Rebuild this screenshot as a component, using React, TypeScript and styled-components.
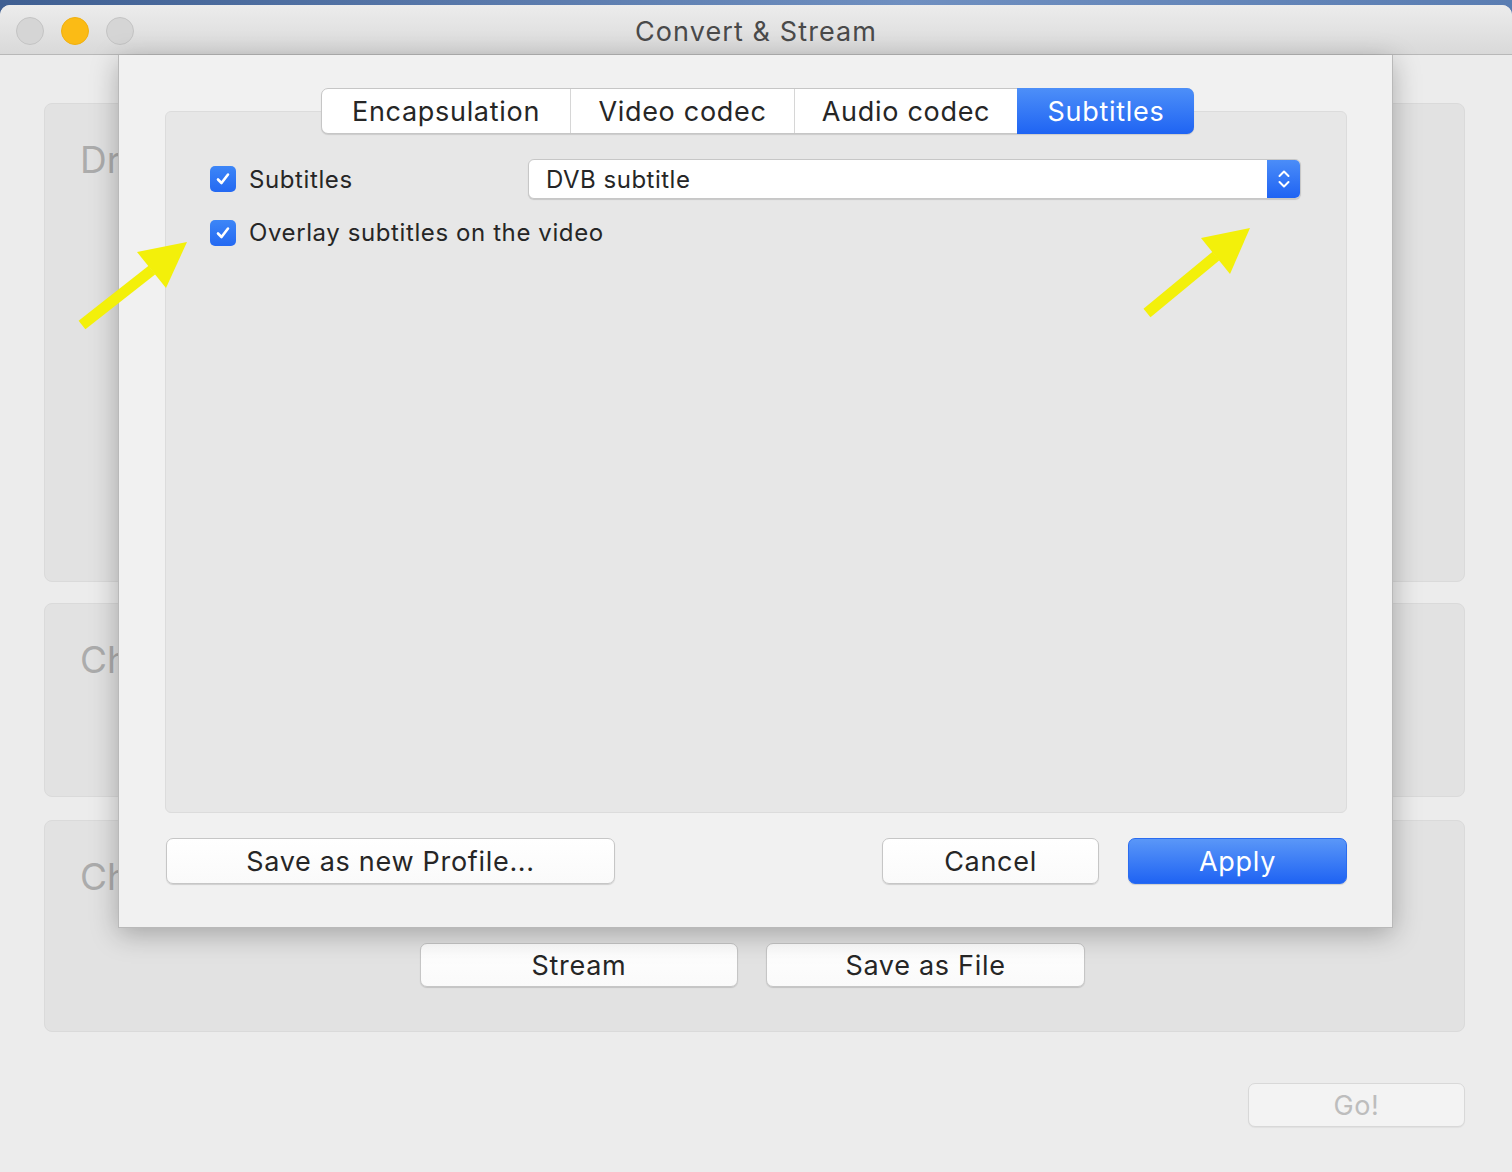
import React from "react";
import styled, { createGlobalStyle } from "styled-components";

const GlobalStyle = createGlobalStyle`
  html, body {
    margin: 0;
    padding: 0;
    background: #5b7db3;
  }
  body {
    font-family: Inter, "Liberation Sans", sans-serif;
  }
  * {
    box-sizing: border-box;
  }
`;

const Page = styled.div`
  position: relative;
  width: 1512px;
  height: 1172px;
  padding-top: 5px;
  background: linear-gradient(90deg, #3f5f92 0%, #6f8fc0 60%, #5a7db2 100%);
  overflow: hidden;
`;

const Window = styled.div`
  height: 1167px;
  border-radius: 10px 10px 0 0;
  background: #ececec;
  display: flex;
  flex-direction: column;
  overflow: hidden;
`;

const TitleBar = styled.div`
  height: 50px;
  flex: none;
  display: grid;
  grid-template-columns: 1fr auto 1fr;
  align-items: center;
  background: linear-gradient(#ececec, #d9d9d9);
  border-bottom: 1px solid #b8b8b8;
`;

const Lights = styled.div`
  display: flex;
  gap: 17px;
  padding-left: 16px;
  padding-top: 2px;
`;

const Light = styled.span<{ $color: string; $edge: string }>`
  width: 28px;
  height: 28px;
  border-radius: 50%;
  background: ${(p) => p.$color};
  border: 1px solid ${(p) => p.$edge};
`;

const Title = styled.div`
  font-size: 27px;
  color: #4a4a4a;
  letter-spacing: 1.1px;
  padding-top: 3px;
`;

const Body = styled.div`
  position: relative;
  flex: 1;
  padding: 48px 47px 0 44px;
  display: flex;
  flex-direction: column;
`;

const Panel = styled.div<{ $h: number }>`
  height: ${(p) => p.$h}px;
  border-radius: 8px;
  background: #e2e2e2;
  border: 1px solid #dadada;
  padding: 34px 0 0 35px;
  display: flex;
  flex-direction: column;
`;

const PanelLabel = styled.div`
  font-size: 37px;
  line-height: 43px;
  color: #acacac;
`;

const PanelButtons = styled.div`
  display: flex;
  justify-content: center;
  gap: 28px;
  margin-top: 45px;
  margin-left: -39px;
`;

const MacButton = styled.button<{ $w: number; $h?: number; $primary?: boolean; $dim?: boolean }>`
  width: ${(p) => p.$w}px;
  height: ${(p) => p.$h ?? 46}px;
  padding: 0;
  border-radius: 7px;
  font-family: inherit;
  font-size: 27px;
  letter-spacing: 0.7px;
  cursor: default;
  color: ${(p) => (p.$primary ? "#ffffff" : p.$dim ? "#bdbdbd" : "#262626")};
  background: ${(p) =>
    p.$primary
      ? "linear-gradient(#5a97f8, #1f63f3)"
      : p.$dim
      ? "#f3f3f3"
      : "linear-gradient(#ffffff, #fafafa)"};
  border: 1px solid ${(p) => (p.$primary ? "#2a6cf0" : p.$dim ? "#d8d8d8" : "#c6c6c6")};
  box-shadow: 0 1px 1px rgba(0, 0, 0, ${(p) => (p.$dim ? 0.05 : 0.14)});
`;

const GoRow = styled.div`
  display: flex;
  justify-content: flex-end;
  margin-top: 51px;
`;

const Stack = styled.div`
  display: flex;
  flex-direction: column;
`;

const Sheet = styled.div`
  position: absolute;
  top: 0;
  left: 118px;
  width: 1275px;
  height: 873px;
  background: #f1f1f1;
  border: 1px solid #b9b9b9;
  border-top: none;
  box-shadow: 0 6px 26px rgba(0, 0, 0, 0.28);
  padding: 33px 45px 43px 46px;
  display: flex;
  flex-direction: column;
`;

const Tabs = styled.div`
  position: relative;
  z-index: 1;
  align-self: center;
  display: flex;
  height: 46px;
  background: #ffffff;
  border: 1px solid #c6c6c6;
  border-radius: 7px;
  box-shadow: 0 1px 1px rgba(0, 0, 0, 0.12);
  margin-left: 3px;
`;

const Tab = styled.div<{ $w: number; $active?: boolean }>`
  width: ${(p) => p.$w}px;
  display: flex;
  align-items: center;
  justify-content: center;
  font-size: 27px;
  letter-spacing: 0.7px;
  color: ${(p) => (p.$active ? "#ffffff" : "#262626")};
  background: ${(p) => (p.$active ? "linear-gradient(#4d8ff8, #1f64f3)" : "transparent")};
  border-left: 1px solid ${(p) => (p.$active ? "transparent" : "#d6d6d6")};
  margin: ${(p) => (p.$active ? "-1px -1px -1px 0" : "0")};
  border-radius: ${(p) => (p.$active ? "0 7px 7px 0" : "0")};
  &:first-child {
    border-left: none;
  }
`;

const GroupBox = styled.div`
  flex: 1;
  margin-top: -23px;
  background: #e7e7e7;
  border: 1px solid #dcdcdc;
  border-radius: 6px;
  padding: 47px 45px 0 44px;
  display: flex;
  flex-direction: column;
  gap: 19px;
`;

const OptionRow = styled.div`
  display: grid;
  grid-template-columns: 318px 1fr;
  align-items: center;
`;

const CheckLabel = styled.label`
  display: flex;
  align-items: center;
  gap: 13px;
  font-size: 24px;
  letter-spacing: 0.6px;
  color: #262626;
`;

const CheckBox = styled.span`
  width: 26px;
  height: 26px;
  border-radius: 5px;
  background: linear-gradient(#3d86f7, #2469f2);
  display: flex;
  align-items: center;
  justify-content: center;
`;

const Select = styled.div`
  height: 40px;
  display: flex;
  align-items: center;
  background: #ffffff;
  border: 1px solid #c7c7c7;
  border-radius: 6px;
  box-shadow: 0 1px 1px rgba(0, 0, 0, 0.14);
  overflow: hidden;
`;

const SelectText = styled.span`
  flex: 1;
  padding-left: 17px;
  font-size: 24px;
  letter-spacing: 0.5px;
  color: #262626;
`;

const Stepper = styled.span`
  width: 33px;
  align-self: stretch;
  background: linear-gradient(#4b8df8, #1f63f3);
  display: flex;
  align-items: center;
  justify-content: center;
`;

const Actions = styled.div`
  display: flex;
  margin-top: 25px;
  gap: 29px;
  padding-left: 1px;
`;

const Spacer = styled.div`
  flex: 1;
`;

const Arrow = styled.svg<{ $x: number; $y: number }>`
  position: absolute;
  left: ${(p) => p.$x}px;
  top: ${(p) => p.$y}px;
  width: 130px;
  height: 110px;
`;

function Check() {
  return (
    <CheckBox>
      <svg width="16" height="16" viewBox="0 0 16 16">
        <path d="M3 8.5 L6.5 12 L13 3.5" fill="none" stroke="#fff" strokeWidth="2.6" strokeLinecap="round" strokeLinejoin="round" />
      </svg>
    </CheckBox>
  );
}

function YellowArrow({ x, y, tail, base, tip, left, right }: {
  x: number; y: number; tail: number[]; base: number[]; tip: number[]; left: number[]; right: number[];
}) {
  return (
    <Arrow $x={x} $y={y} viewBox={`${x} ${y} 130 110`}>
      <line x1={tail[0]} y1={tail[1]} x2={base[0]} y2={base[1]} stroke="#f3f00a" strokeWidth="11" />
      <polygon points={`${tip.join(",")} ${left.join(",")} ${right.join(",")}`} fill="#f3f00a" />
    </Arrow>
  );
}

export default function App() {
  return (
    <Page>
      <GlobalStyle />
      <Window>
        <TitleBar>
          <Lights>
            <Light $color="#d5d5d5" $edge="#c4c4c4" />
            <Light $color="#fbbb15" $edge="#f0b010" />
            <Light $color="#d5d5d5" $edge="#c4c4c4" />
          </Lights>
          <Title>Convert &amp; Stream</Title>
          <div />
        </TitleBar>
        <Body>
          <Stack>
            <Panel $h={479}>
              <PanelLabel>Dr</PanelLabel>
            </Panel>
            <div style={{ height: 21 }} />
            <Panel $h={194}>
              <PanelLabel>Ch</PanelLabel>
            </Panel>
            <div style={{ height: 23 }} />
            <Panel $h={212}>
              <PanelLabel>Ch</PanelLabel>
              <PanelButtons>
                <MacButton $w={318} $h={44}>Stream</MacButton>
                <MacButton $w={319} $h={44}>Save as File</MacButton>
              </PanelButtons>
            </Panel>
          </Stack>
          <GoRow>
            <MacButton $w={217} $h={44} $dim>Go!</MacButton>
          </GoRow>

          <Sheet>
            <Tabs>
              <Tab $w={248}>Encapsulation</Tab>
              <Tab $w={224}>Video codec</Tab>
              <Tab $w={223}>Audio codec</Tab>
              <Tab $w={177} $active>Subtitles</Tab>
            </Tabs>
            <GroupBox>
              <OptionRow>
                <CheckLabel>
                  <Check />
                  Subtitles
                </CheckLabel>
                <Select>
                  <SelectText>DVB subtitle</SelectText>
                  <Stepper>
                    <svg width="14" height="24" viewBox="0 0 14 24">
                      <path d="M2.5 9 L7 4.5 L11.5 9 M2.5 15 L7 19.5 L11.5 15" fill="none" stroke="#fff" strokeWidth="2" strokeLinecap="round" strokeLinejoin="round" />
                    </svg>
                  </Stepper>
                </Select>
              </OptionRow>
              <CheckLabel>
                <Check />
                Overlay subtitles on the video
              </CheckLabel>
            </GroupBox>
            <Actions>
              <MacButton $w={449}>Save as new Profile...</MacButton>
              <Spacer />
              <MacButton $w={217}>Cancel</MacButton>
              <MacButton $w={219} $primary>Apply</MacButton>
            </Actions>
          </Sheet>
        </Body>
      </Window>

      <YellowArrow x={70} y={230} tail={[82, 325]} base={[152, 270]} tip={[187, 242]} left={[137, 252]} right={[166, 288]} />
      <YellowArrow x={1135} y={220} tail={[1147, 313]} base={[1216, 256]} tip={[1250, 228]} left={[1201, 238]} right={[1230, 274]} />
    </Page>
  );
}
